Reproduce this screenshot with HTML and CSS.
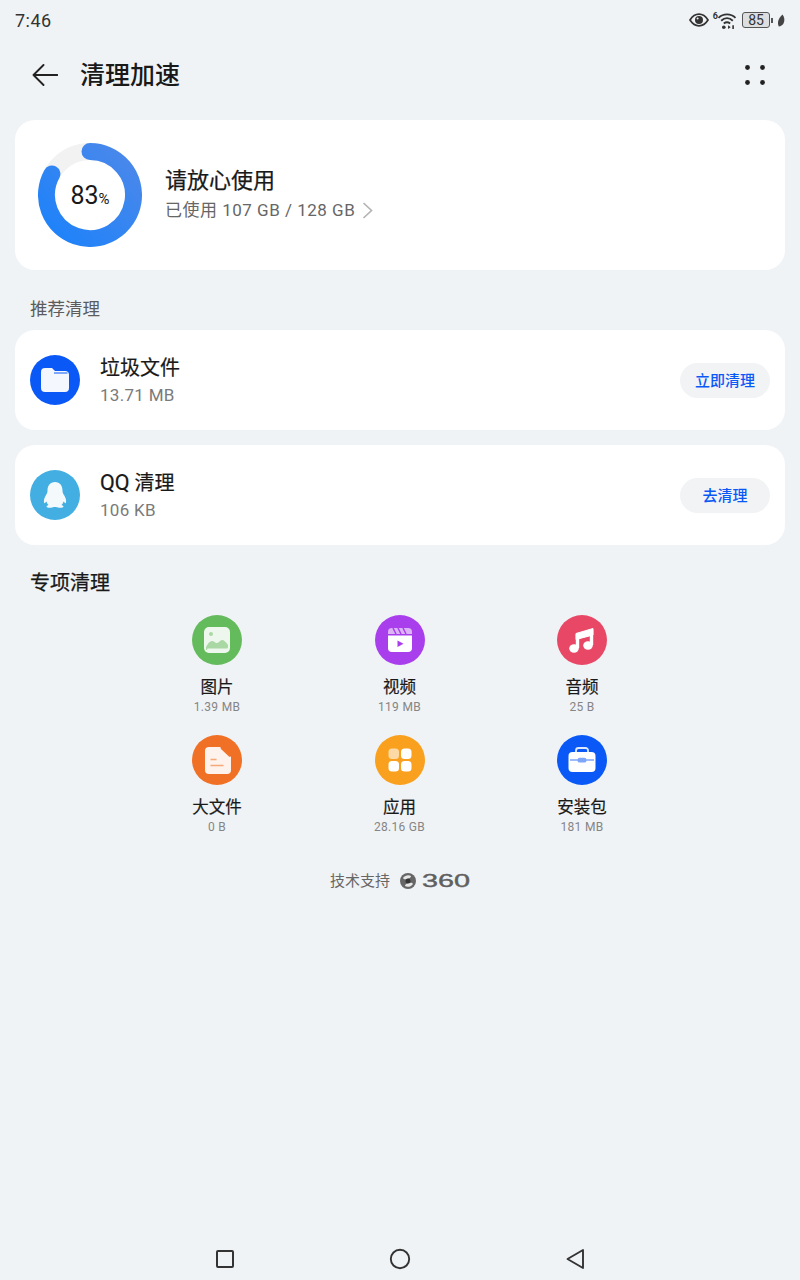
FILE: index.html
```html
<!DOCTYPE html>
<html>
  <head>
    <meta charset="UTF-8" />
    <title>清理加速</title>
    <link rel="stylesheet" href="styles.css">
  </head>
  <body>
    <div class="page">
      <div class="status-bar">
        <span class="clock">7:46</span>
        <div class="status-icons">
          <svg class="eye" width="20" height="14" viewBox="0 0 20 14">
            <path d="M1 7C3.5 3 6.5 1.2 10 1.2S16.5 3 19 7c-2.5 4-5.500 5.800-9 5.800S3.500 11 1 7z" fill="none" stroke="#333" stroke-width="1.700"/>
            <circle cx="10" cy="7" r="4" fill="#333"/>
            <circle cx="8.600" cy="5.600" r="1" fill="#eee"/>
          </svg>
          <span class="net-type">6</span>
          <svg class="wifi" width="20" height="17" viewBox="0 0 18 16">
            <g fill="none" stroke="#333" stroke-width="1.800">
              <path d="M1 5.500C5.500 1.200 12.500 1.200 17 5.500"/>
              <path d="M3.500 8.200C6.800 5.200 11.200 5.200 14.500 8.200"/>
              <path d="M6 10.800C8 9.300 10 9.300 12 10.800"/>
            </g>
            <circle cx="6" cy="14.300" r="1.700" fill="#333"/>
            <path d="M10 12.500v3.500l2.500-1.700zM14 12.500v3.500h1.500v-3.500z" fill="#333"/>
          </svg>
          <div class="battery"><span>85</span></div>
          <span class="battery-tip"></span>
          <svg class="leaf" width="8" height="13" viewBox="0 0 8 13">
            <path d="M5.500 0.500C7.500 3 8 6.500 6.500 9.500 5.500 11.300 3.500 12.300 1.800 12.500 0.300 9.500 0.500 5 5.500 0.500z" fill="#444"/>
          </svg>
        </div>
      </div>

      <div class="app-bar">
        <svg class="back" width="26" height="22" viewBox="0 0 26 22">
          <path d="M25.500 11H1.500M11.500 1L1.500 11l10 10" fill="none" stroke="#222" stroke-width="1.900" stroke-linecap="round" stroke-linejoin="round"/>
        </svg>
        <h1 class="app-title">清理加速</h1>
        <svg class="more" width="20" height="20" viewBox="0 0 20 20">
          <circle cx="2.500" cy="2.500" r="2.400" fill="#222"/>
          <circle cx="17.500" cy="2.500" r="2.400" fill="#222"/>
          <circle cx="2.500" cy="17.500" r="2.400" fill="#222"/>
          <circle cx="17.500" cy="17.500" r="2.400" fill="#222"/>
        </svg>
      </div>

      <div class="card card-storage">
        <div class="donut">
          <svg width="104" height="104" viewBox="0 0 104 104">
            <defs>
              <linearGradient id="donutFill" x1="1" y1="0" x2="0" y2="1">
                <stop offset="0" stop-color="#4c88ea"/>
                <stop offset="1" stop-color="#1c82fa"/>
              </linearGradient>
            </defs>
            <circle cx="52" cy="52" r="43.500" fill="none" stroke="#f2f2f2" stroke-width="17"/>
            <path d="M52 8.500A43.500 43.500 0 1 1 13.900 31" fill="none" stroke="url(#donutFill)" stroke-width="17" stroke-linecap="round"/>
          </svg>
          <div class="donut-label">83<small>%</small></div>
        </div>
        <div class="storage-text">
          <div class="storage-title">请放心使用</div>
          <div class="storage-sub">
            已使用 107 GB / 128 GB
            <svg width="11" height="17" viewBox="0 0 11 17">
              <path d="M1.500 1l8 7.500-8 7.500" fill="none" stroke="#b4b4b4" stroke-width="1.700"/>
            </svg>
          </div>
        </div>
      </div>

      <div class="section-label">推荐清理</div>

      <div class="card card-row">
        <svg class="row-icon" width="50" height="50" viewBox="0 0 50 50">
          <circle cx="25" cy="25" r="25" fill="#0a59f7"/>
          <path d="M11 17a4 4 0 0 1 4-4h7l3 3h10a4 4 0 0 1 4 4v13a4 4 0 0 1-4 4H15a4 4 0 0 1-4-4z" fill="#f4f7fd"/>
          <path d="M24 18h13.500" stroke="#0a59f7" stroke-width="1"/>
        </svg>
        <div class="row-text">
          <div class="row-title">垃圾文件</div>
          <div class="row-sub">13.71 MB</div>
        </div>
        <button class="pill">立即清理</button>
      </div>

      <div class="card card-row">
        <svg class="row-icon" width="50" height="50" viewBox="0 0 50 50">
          <circle cx="25" cy="25" r="25" fill="#42aee2"/>
          <path d="M25 12c5 0 7.500 4 7.500 8.500 0 2 .5 3 1.500 4.500 1.500 2.500 2.500 5 2 7.500-.5 1.500-1.500 0-2.500-1-.3 1.500-1 2.700-2 3.500 1.300.5 2 1 2 1.500 0 1-2.500 1.500-4.500 1.200-1.500-.2-2.500-.7-4-.7s-2.500.5-4 .7c-2 .3-4.500-.2-4.500-1.200 0-.5.7-1 2-1.500-1-.8-1.700-2-2-3.500-1 1-2 2.500-2.500 1-.5-2.500.5-5 2-7.500 1-1.500 1.500-2.500 1.500-4.500C17.500 16 20 12 25 12z" fill="#f4f9fc"/>
        </svg>
        <div class="row-text">
          <div class="row-title"><span class="qq">QQ</span> 清理</div>
          <div class="row-sub">106 KB</div>
        </div>
        <button class="pill">去清理</button>
      </div>

      <div class="section-title">专项清理</div>

      <div class="tools">
        <div class="tool">
          <svg width="50" height="50" viewBox="0 0 50 50">
            <circle cx="25" cy="25" r="25" fill="#64bb5c"/>
            <rect x="12" y="12" width="26" height="26" rx="5" fill="#eef7ed"/>
            <circle cx="19" cy="19" r="2" fill="#a9d8a4"/>
            <path d="M14 35v-3c2-4 4-6 6-6s3 2 5 2 3-3 5-3 4 2 6 5v2a1.500 1.500 0 0 1-1.500 1.500h-19A1.500 1.500 0 0 1 14 35z" fill="#a9d8a4"/>
          </svg>
          <div class="tool-name">图片</div>
          <div class="tool-size">1.39 MB</div>
        </div>
        <div class="tool">
          <svg width="50" height="50" viewBox="0 0 50 50">
            <circle cx="25" cy="25" r="25" fill="#a93fec"/>
            <path d="M13 19v-2a4 4 0 0 1 4-4h16a4 4 0 0 1 4 4v2z" fill="#dcb4f6"/>
            <path d="M18 13l3 6M23 13l3 6M28 13l3 6" stroke="#a93fec" stroke-width="1.500"/>
            <path d="M13 20.500h24V33a4 4 0 0 1-4 4H17a4 4 0 0 1-4-4z" fill="#fff"/>
            <path d="M22.500 25.500l6 3.200-6 3.300z" fill="#a93fec"/>
          </svg>
          <div class="tool-name">视频</div>
          <div class="tool-size">119 MB</div>
        </div>
        <div class="tool">
          <svg width="50" height="50" viewBox="0 0 50 50">
            <circle cx="25" cy="25" r="25" fill="#e84866"/>
            <path d="M19 18.500L36 13.500V20L19 24.500z" fill="#fff" stroke="#fff" stroke-linejoin="round"/>
            <path d="M20.500 33V19M34.500 30V15" fill="none" stroke="#fff" stroke-width="3.400"/>
            <ellipse cx="17" cy="33.500" rx="4.800" ry="4.200" fill="#fff"/>
            <ellipse cx="31" cy="30.500" rx="4.800" ry="4.200" fill="#fff"/>
          </svg>
          <div class="tool-name">音频</div>
          <div class="tool-size">25 B</div>
        </div>
        <div class="tool">
          <svg width="50" height="50" viewBox="0 0 50 50">
            <circle cx="25" cy="25" r="25" fill="#f07025"/>
            <path d="M17 12h11l11 10v13a4 4 0 0 1-4 4H17a4 4 0 0 1-4-4V16a4 4 0 0 1 4-4z" fill="#fdf3ec"/>
            <path d="M29 13l9 8.500" stroke="#f07025" stroke-width="1.500"/>
            <path d="M18.500 24.500h6M18.500 30.500h13" stroke="#f7a878" stroke-width="1.600"/>
          </svg>
          <div class="tool-name">大文件</div>
          <div class="tool-size">0 B</div>
        </div>
        <div class="tool">
          <svg width="50" height="50" viewBox="0 0 50 50">
            <circle cx="25" cy="25" r="25" fill="#f9a01e"/>
            <rect x="13.500" y="13.500" width="10.500" height="10.500" rx="3.500" fill="#fcd9a5"/>
            <rect x="26" y="13.500" width="10.500" height="10.500" rx="3.500" fill="#fff"/>
            <rect x="13.500" y="26" width="10.500" height="10.500" rx="3.500" fill="#fff"/>
            <rect x="26" y="26" width="10.500" height="10.500" rx="3.500" fill="#fff"/>
          </svg>
          <div class="tool-name">应用</div>
          <div class="tool-size">28.16 GB</div>
        </div>
        <div class="tool">
          <svg width="50" height="50" viewBox="0 0 50 50">
            <circle cx="25" cy="25" r="25" fill="#0a59f7"/>
            <path d="M19 17v-1.500a2.500 2.500 0 0 1 2.500-2.500h7a2.500 2.500 0 0 1 2.500 2.500V17" fill="none" stroke="#dfe9fd" stroke-width="1.800"/>
            <rect x="11.500" y="17" width="27" height="20" rx="4" fill="#fff"/>
            <path d="M13 25h8M29 25h8" stroke="#7ea6f8" stroke-width="1.300"/>
            <rect x="20.500" y="22.800" width="9" height="4.800" rx="2.200" fill="#7ea6f8"/>
          </svg>
          <div class="tool-name">安装包</div>
          <div class="tool-size">181 MB</div>
        </div>
      </div>

      <div class="support">
        <span>技术支持</span>
        <svg width="16" height="16" viewBox="0 0 16 16">
          <circle cx="8" cy="8" r="8" fill="#666"/>
          <path d="M3 5c2-3 6-3.500 8-2 0 2-3 3-4 3S4 7 3 5zM13 11c-2 3-6 3.500-8 2 0-2 3-3 4-3s3-1 4 1z" fill="#e6e6e6"/>
          <circle cx="8" cy="8" r="2.500" fill="#333"/>
        </svg>
        <span class="brand">360</span>
      </div>

      <div class="nav-bar">
        <svg width="24" height="24" viewBox="0 0 24 24">
          <rect x="4" y="4" width="16" height="16" rx="1" fill="none" stroke="#333" stroke-width="2"/>
        </svg>
        <svg width="24" height="24" viewBox="0 0 24 24">
          <circle cx="12" cy="12" r="9.200" fill="none" stroke="#333" stroke-width="1.900"/>
        </svg>
        <svg width="24" height="24" viewBox="0 0 24 24">
          <path d="M20 3v18L4.500 12z" fill="none" stroke="#333" stroke-width="1.900" stroke-linejoin="round"/>
        </svg>
      </div>
    </div>
  </body>
</html>
```

FILE: styles.css
```css
body {
    margin: 0;
    background-color: #f0f3f6;
    color: #191919;
    font-family: Roboto, "Noto Sans CJK SC", sans-serif;
}
svg { display: block; flex-shrink: 0; }

.page {
    height: 1280px;
    display: flex;
    flex-direction: column;
    overflow: hidden;
}

/* Status bar */
.status-bar {
    height: 40px;
    padding: 0 15px;
    display: flex;
    align-items: center;
    justify-content: space-between;
}
.clock { font-size: 18px; color: #333; letter-spacing: 0.5px; }
.status-icons { display: flex; align-items: center; }
.eye { margin-right: 4px; }
.net-type { font-size: 9px; font-weight: 700; color: #333; margin: -8px -1px 0 0; }
.wifi { margin-right: 5px; }
.battery {
    width: 28px;
    height: 16px;
    box-sizing: border-box;
    border: 1px solid #555;
    border-radius: 3px;
    background-color: #dcdee0;
    display: flex;
    align-items: center;
    justify-content: center;
    font-size: 14px;
    color: #333;
}
.battery-tip {
    width: 2px;
    height: 5px;
    background-color: #555;
    margin: 0 4px 0 1px;
}

/* App bar */
.app-bar {
    height: 70px;
    padding: 0 35px 0 32px;
    display: flex;
    align-items: center;
}
.app-title {
    margin: 2px 0 0 22px;
    flex: 1;
    font-size: 25px;
    line-height: 32px;
    font-weight: 500;
}

/* Cards */
.card {
    margin: 0 15px;
    background-color: #fff;
    border-radius: 20px;
    display: flex;
    align-items: center;
}
.card-storage {
    margin-top: 10px;
    height: 150px;
    padding-left: 23px;
}
.donut { position: relative; width: 104px; height: 104px; }
.donut-label {
    position: absolute;
    left: 0;
    right: 0;
    top: 38px;
    text-align: center;
    font-size: 25px;
    line-height: 30px;
}
.donut-label small { font-size: 15px; }
.storage-text { margin: 0 0 2px 24px; }
.storage-title {
    margin-left: -1px;
    font-size: 22px;
    line-height: 30px;
    -webkit-text-stroke: 0.25px #191919;
}
.storage-sub {
    margin: 2px 0 0 -1px;
    display: flex;
    align-items: center;
    gap: 7px;
    font-size: 17px;
    line-height: 24px;
    letter-spacing: 0.5px;
    color: #666;
}

.section-label {
    margin: 27px 30px 9px;
    font-size: 17.500px;
    line-height: 24px;
    color: #5c5c5c;
}

.card-row {
    height: 100px;
    padding: 0 15px;
    margin-bottom: 15px;
}
.row-text { flex: 1; margin-left: 20px; }
.row-title {
    font-size: 20px;
    line-height: 30px;
    -webkit-text-stroke: 0.2px #191919;
}
.qq { font-size: 21.500px; }
.row-sub { font-size: 17px; line-height: 24px; letter-spacing: 0.3px; color: #7a7a7a; }
.pill {
    width: 90px;
    height: 35px;
    padding: 0 0 2px;
    border: 0;
    border-radius: 18px;
    background-color: #f1f3f5;
    color: #0a59f7;
    font-family: inherit;
    font-size: 15px;
    font-weight: 500;
}

.section-title {
    margin: 9px 30px 0;
    font-size: 20px;
    line-height: 28px;
    -webkit-text-stroke: 0.25px #191919;
}

/* Special cleanup grid */
.tools {
    margin-top: 18px;
    padding-right: 1px;
    display: grid;
    grid-template-columns: repeat(3, 182.500px);
    justify-content: center;
    grid-auto-rows: 120px;
}
.tool { display: flex; flex-direction: column; align-items: center; }
.tool-name {
    margin-top: 11px;
    font-size: 16.500px;
    line-height: 24px;
    -webkit-text-stroke: 0.2px #191919;
}
.tool-size { font-size: 12px; line-height: 14px; letter-spacing: 0.3px; color: #858585; }

.support {
    margin-top: 15px;
    display: flex;
    align-items: center;
    justify-content: center;
    gap: 10px;
    font-size: 15px;
    line-height: 22px;
    color: #666;
}
.brand {
    width: 48px;
    margin-left: -4px;
    font-family: "Liberation Sans", sans-serif;
    font-size: 18px;
    color: #5f5f5f;
    -webkit-text-stroke: 0.4px #5f5f5f;
    transform: scaleX(1.6);
    transform-origin: left center;
}

/* Navigation bar */
.nav-bar {
    margin-top: auto;
    height: 42px;
    display: flex;
    align-items: center;
    justify-content: center;
    gap: 151px;
}
```
